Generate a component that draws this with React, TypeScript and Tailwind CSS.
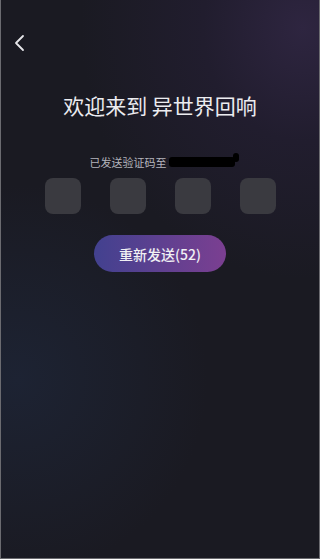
import React from "react";

export default function App() {
  return (
    <div
      className="w-[320px] h-[559px] overflow-hidden flex flex-col border-x border-b border-[#6b6b70] bg-[#1a1a22] bg-[radial-gradient(ellipse_70%_45%_at_95%_5%,#2e2540_0%,rgba(40,32,58,0.5)_45%,transparent_100%),radial-gradient(ellipse_60%_35%_at_5%_68%,#1d2333_0%,rgba(29,35,51,0.5)_50%,transparent_100%)]"
      style={{ fontFamily: '"Noto Sans CJK SC", "Noto Sans", Roboto, sans-serif' }}
    >
      <div className="pt-[34px] pl-[12px] h-[60px]">
        <svg width="14" height="18" viewBox="0 0 14 18" fill="none">
          <path d="M10 2 L3 9 L10 16" stroke="#e6e6ea" strokeWidth="1.8" strokeLinecap="round" strokeLinejoin="round" />
        </svg>
      </div>
      <h1 className="mt-[31px] text-center text-[21px] leading-[28px] text-[#ececf0] font-normal">
        欢迎来到 异世界回响
      </h1>
      <div className="mt-[36px] flex items-center justify-center text-[11px] leading-[14px] text-[#b4b4bc] pl-[4px]">
        <span>已发送验证码至</span>
        <span className="relative ml-[2px] inline-block w-[66px] h-[10px] bg-black rounded-[3px]">
          <span className="absolute right-[-4px] top-[-4px] w-[6px] h-[9px] bg-black rounded-full" />
        </span>
      </div>
      <div className="mt-[9px] flex justify-center gap-[29px]">
        <div className="w-[36px] h-[36px] rounded-[8px] bg-[#3a3a40]" />
        <div className="w-[36px] h-[36px] rounded-[8px] bg-[#3a3a40]" />
        <div className="w-[36px] h-[36px] rounded-[8px] bg-[#3a3a40]" />
        <div className="w-[36px] h-[36px] rounded-[8px] bg-[#3a3a40]" />
      </div>
      <div className="mt-[21px] flex justify-center">
        <button className="w-[132px] h-[37px] rounded-full bg-[linear-gradient(90deg,#42418f,#7b3f91)] text-[#f0f0f4] text-[14px] leading-none font-medium">
          重新发送(52)
        </button>
      </div>
    </div>
  );
}
